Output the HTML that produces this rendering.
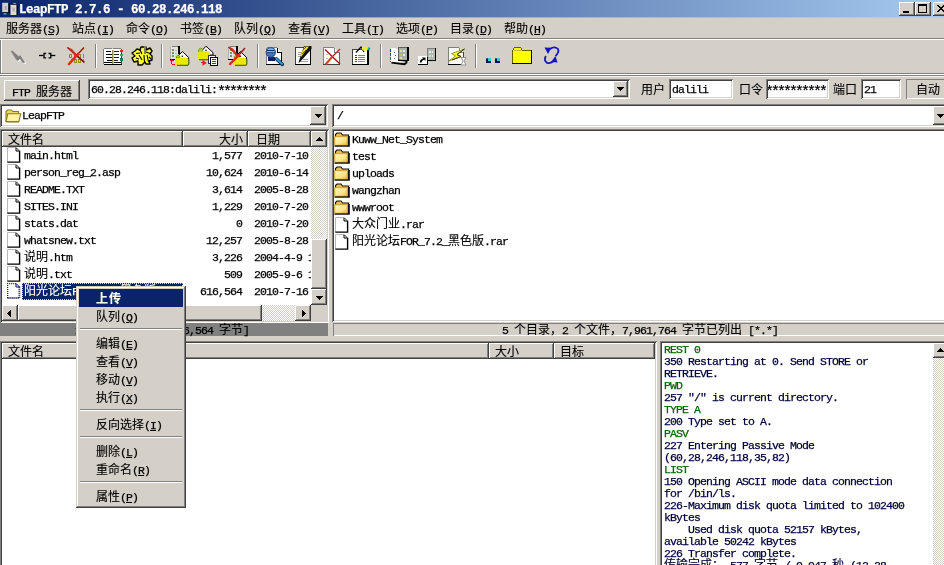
<!DOCTYPE html>
<html lang="zh-CN"><head><meta charset="utf-8"><title>LeapFTP 2.7.6 - 60.28.246.118</title>
<style>
html,body{margin:0;padding:0;width:944px;height:565px;overflow:hidden;background:#d4d0c8}
body{position:relative;font-family:"Liberation Mono","Noto Sans CJK SC",monospace;font-size:11.5px;letter-spacing:-.9px;color:#000;line-height:12px}
#w{position:absolute;left:0;top:0;width:944px;height:565px;overflow:hidden;will-change:transform}
.a{position:absolute;box-sizing:border-box}
.t{position:absolute;white-space:pre;height:12px;line-height:12px;-webkit-text-stroke:.25px}
.c{letter-spacing:0;font-size:12px;line-height:0;-webkit-text-stroke:.12px}
.s{font-size:15px;letter-spacing:-3px;line-height:0;position:relative;top:3px}
.b{font-weight:bold;letter-spacing:.1px}
.b .c{letter-spacing:1px}
.tt{font-size:12.5px;letter-spacing:-.5px}
u{text-decoration:underline}
.btn{background:#d4d0c8;box-shadow:inset -1px -1px 0 #404040,inset 1px 1px 0 #fff,inset -2px -2px 0 #808080,inset 2px 2px 0 #d4d0c8}
.sunk{box-shadow:inset 1px 1px 0 #808080,inset -1px -1px 0 #fff,inset 2px 2px 0 #404040,inset -2px -2px 0 #d4d0c8}
.hd{background:#d4d0c8;box-shadow:inset -1px -1px 0 #404040,inset 1px 1px 0 #fff,inset -2px -2px 0 #808080}
.track{background:#e9e7e3 repeating-conic-gradient(#fff 0% 25%,#d4d0c8 0% 50%) 0 0/2px 2px}
.menu{background:#d4d0c8;box-shadow:inset -1px -1px 0 #404040,inset 1px 1px 0 #d4d0c8,inset -2px -2px 0 #808080,inset 2px 2px 0 #fff}
</style></head>
<body>
<div id="w">
<div class="a" style="left:0;top:0;width:944px;height:18px;background:linear-gradient(90deg,#0a246a 0%,#a6caf0 100%)"></div>
<div class="t b tt" style="left:19px;top:4px;color:#fff">LeapFTP 2.7.6 - 60.28.246.118</div>
<div class="a" style="left:0px;top:17px;width:944px;height:1px;background:rgba(212,208,200,.6);"></div>
<svg class="a" style="left:0;top:0" width="20" height="18" viewBox="0 0 20 18"><rect x="2.200" y="2.800" width="6.200" height="9.400" fill="#d2d0c0"/><rect x="8.400" y="3" width="1.700" height="10" fill="#000"/><rect x="2.500" y="12.200" width="6" height="1" fill="#101830"/><rect x="4.600" y="6" width="2.200" height="3.500" fill="#a8a0b0"/><rect x="3.500" y="13.200" width="3" height="1.300" fill="#58b8e8"/><rect x="10.500" y="4.500" width="6.200" height="10.500" fill="#dcdad0"/><rect x="16.600" y="4.500" width="1.200" height="10.500" fill="#000"/><rect x="12.500" y="7.500" width="2.200" height="4" fill="#b8a8b8"/><rect x="13.300" y="3" width="2.500" height="1.300" fill="#58b8e8"/><rect x="10.500" y="4" width="6" height=".8" fill="#101830"/></svg>
<div class="a btn" style="left:899px;top:2px;width:16px;height:14px;"></div>
<div class="a btn" style="left:915px;top:2px;width:16px;height:14px;"></div>
<div class="a btn" style="left:933px;top:2px;width:16px;height:14px;"></div>
<div class="a" style="left:903px;top:11px;width:6px;height:2px;background:#000;"></div>
<div class="a " style="left:918px;top:4px;width:9px;height:9px;border:1px solid #000;border-top:2px solid #000;box-sizing:border-box"></div>
<svg class="a" style="left:937px;top:5px" width="8" height="7" shape-rendering="crispEdges"><path d="M0 0h2v1h1v1h2v-1h1v-1h2v1h-1v1h-1v1h-1v1h1v1h1v1h1v1h-2v-1h-1v-1h-2v1h-1v1h-2v-1h1v-1h1v-1h1v-1h-1v-1h-1v-1h-1z" fill="#000"/></svg>
<div class="t" style="left:6px;top:24px"><span class="c">服务器</span>(<u>S</u>)</div>
<div class="t" style="left:72px;top:24px"><span class="c">站点</span>(<u>I</u>)</div>
<div class="t" style="left:126px;top:24px"><span class="c">命令</span>(<u>O</u>)</div>
<div class="t" style="left:180px;top:24px"><span class="c">书签</span>(<u>B</u>)</div>
<div class="t" style="left:234px;top:24px"><span class="c">队列</span>(<u>Q</u>)</div>
<div class="t" style="left:288px;top:24px"><span class="c">查看</span>(<u>V</u>)</div>
<div class="t" style="left:342px;top:24px"><span class="c">工具</span>(<u>T</u>)</div>
<div class="t" style="left:396px;top:24px"><span class="c">选项</span>(<u>P</u>)</div>
<div class="t" style="left:450px;top:24px"><span class="c">目录</span>(<u>D</u>)</div>
<div class="t" style="left:504px;top:24px"><span class="c">帮助</span>(<u>H</u>)</div>
<div class="a" style="left:0px;top:38px;width:944px;height:1px;background:#808080;"></div>
<div class="a" style="left:0px;top:39px;width:944px;height:1px;background:#fff;"></div>
<div class="a" style="left:0px;top:40px;width:1px;height:33px;background:#808080;"></div>
<div class="a" style="left:1px;top:40px;width:1px;height:33px;background:#fff;"></div>
<div class="a" style="left:0px;top:73px;width:944px;height:1px;background:#808080;"></div>
<div class="a" style="left:0px;top:74px;width:944px;height:1px;background:#fff;"></div>
<div class="a" style="left:0px;top:75px;width:944px;height:1px;background:#808080;"></div>
<div class="a" style="left:0px;top:76px;width:944px;height:1px;background:#f4f3f0;"></div>
<div class="a" style="left:95px;top:44px;width:1px;height:24px;background:#808080;"></div>
<div class="a" style="left:96px;top:44px;width:1px;height:24px;background:#fff;"></div>
<div class="a" style="left:161px;top:44px;width:1px;height:24px;background:#808080;"></div>
<div class="a" style="left:162px;top:44px;width:1px;height:24px;background:#fff;"></div>
<div class="a" style="left:257px;top:44px;width:1px;height:24px;background:#808080;"></div>
<div class="a" style="left:258px;top:44px;width:1px;height:24px;background:#fff;"></div>
<div class="a" style="left:380px;top:44px;width:1px;height:24px;background:#808080;"></div>
<div class="a" style="left:381px;top:44px;width:1px;height:24px;background:#fff;"></div>
<div class="a" style="left:475px;top:44px;width:1px;height:24px;background:#808080;"></div>
<div class="a" style="left:476px;top:44px;width:1px;height:24px;background:#fff;"></div>
<svg class="a" style="left:0;top:40px" width="944" height="34" viewBox="0 40 944 34"><path d="M11.700 52 L13.500 51.800 L20 57.500 L21.300 56 L25.800 63 L25.400 64.200 L23.500 63.500 L21 60 L19 62 L17 60.500 Z" fill="#fff"/><path d="M10.700 51 L12.500 50.800 L19 56.500 L20.300 55 L24.800 62 L24.400 63.200 L22.500 62.500 L20 59 L18 61 L16 59.500 Z" fill="#808080"/><g fill="none" stroke="#000" stroke-width="1.300"><path d="M39 55.500 H43.500"/><path d="M46.200 53.500 H44 V57.800 H46.200"/><path d="M48.500 53.500 H50.800 V57.800 H48.500"/><path d="M51 55.500 H55.300"/></g><g fill="#908820" shape-rendering="crispEdges"><path d="M69 54h3v4h-3z M70 55v2h1v-2z" fill-rule="evenodd"/><rect x="74" y="54" width="1" height="4"/><path d="M78 54h3v4h-3z M79 55v2h1v-2z" fill-rule="evenodd"/><rect x="83" y="54" width="1" height="4"/><rect x="71" y="59" width="1" height="4"/><path d="M74 59h3v4h-3z M75 60v2h1v-2z" fill-rule="evenodd"/><path d="M78 59h3v4h-3z M79 60v2h1v-2z" fill-rule="evenodd"/><rect x="83" y="59" width="1" height="4"/></g><path d="M67.5 47.5 L84.5 62.5" stroke="#800000" stroke-width="1.6" fill="none"/><path d="M67 47 L72 49 L78 56 L76 57 Z" fill="#c03020"/><path d="M84 47.5 L77 55" stroke="#901010" stroke-width="1.3" fill="none"/><path d="M78 54 L69 64" stroke="#e02818" stroke-width="2.6" fill="none" stroke-linecap="round"/><g shape-rendering="crispEdges"><rect x="104" y="49" width="17" height="15" fill="#fff"/><rect x="103" y="49" width="1" height="15" fill="#808080"/><rect x="104" y="48" width="8" height="1" fill="#808080"/><rect x="113" y="48" width="8" height="1" fill="#808080"/><rect x="112" y="50" width="1" height="14" fill="#8a9048"/><rect x="113" y="50" width="1" height="14" fill="#c8c8a0"/><rect x="106" y="51" width="5" height="1" fill="#000"/><rect x="106" y="54" width="6" height="1" fill="#000"/><rect x="106" y="57" width="6" height="1" fill="#000"/><rect x="107" y="60" width="5" height="1" fill="#000"/><rect x="114" y="51" width="5" height="1" fill="#202020"/><rect x="114" y="54" width="5" height="1" fill="#202020"/><rect x="114" y="57" width="5" height="1" fill="#202020"/><rect x="114" y="60" width="4" height="1" fill="#202020"/><rect x="104" y="62" width="8" height="1" fill="#000"/><rect x="114" y="62" width="7" height="1" fill="#000"/><rect x="104" y="64" width="18" height="1" fill="#000"/><rect x="121" y="49" width="1" height="15" fill="#404040"/><rect x="120" y="50" width="3" height="2" fill="#e02828"/><rect x="120" y="54" width="3" height="2" fill="#40a070"/><rect x="120" y="58" width="3" height="3" fill="#187868"/></g><path d="M137 49 L140 50 L141 47 L146 47 L146 50 L150 48 L152 51 L150 54 L152 56 L152 60 L149 61 L150 64 L146 64 L145 62 L142 65 L138 65 L138 61 L134 62 L132 58 L135 56 L132 53 L135 51 Z" fill="#ffff30" stroke="#000" stroke-width="1.4" stroke-linejoin="round"/><path d="M139 55 L142 60 M144 55 L144.500 63 M147 55 L148.500 62 M136 53.500 L140 53 M146 52 L150 53.500 M140 50 L142 54 M149 57 L151 59 M136 58 L139 59" stroke="#000" stroke-width="1.100" fill="none"/><rect x="144" y="46" width="2" height="8" fill="#808060"/><g shape-rendering="crispEdges"><rect x="171" y="47" width="7" height="12" fill="#e4e4e4"/><rect x="172" y="46" width="7" height="1" fill="#808080"/><rect x="170" y="47" width="1" height="12" fill="#b0b0b0"/><rect x="178" y="46" width="2" height="8" fill="#000"/><rect x="172" y="49" width="2" height="2" fill="#909040"/><rect x="172" y="52" width="2" height="2" fill="#60a050"/><rect x="172" y="55" width="2" height="2" fill="#60a050"/><rect x="175" y="50" width="2" height="1" fill="#b8b8b8"/><rect x="175" y="53" width="2" height="1" fill="#b8b8b8"/><rect x="170" y="59" width="5" height="1" fill="#000"/></g><path d="M176.5 57.500 L182.4 51.500 L188.6 57.500 L188.6 59 L176.5 59 Z" fill="#fff" stroke="#000" stroke-width="1"/><path d="M176 57.500 Q176.5 54.300 179.5 55.800 L180 57.500 Z" fill="#b8d020" stroke="#60a000" stroke-width=".8"/><rect x="175.5" y="57.800" width="13" height="7.500" rx="2" fill="#e8e800"/><path d="M177 65.300 H187.5 Q188.8 65 188.8 63.500 V59" stroke="#487800" stroke-width="1.300" fill="none"/><rect x="181.7" y="55.500" width="1.400" height="1.500" fill="#303030"/><g fill="#e01010" shape-rendering="crispEdges"><rect x="171" y="59" width="1" height="5"/><rect x="170" y="60" width="4" height="1"/><rect x="172" y="64" width="3" height="1"/></g><path d="M201 51.500 L206 46.200 L213 52.600 L213 55 L201 55 Z" fill="#fff" stroke="#000" stroke-width="1"/><path d="M198.300 51.500 Q198.800 47 202 48.600 L203 51.500 Z" fill="#b8d020" stroke="#60a000" stroke-width=".8"/><rect x="198" y="51.300" width="12" height="8.400" rx="2" fill="#e8e800"/><path d="M199 59.700 H209" stroke="#487800" stroke-width="1.300"/><rect x="205.300" y="49.500" width="1.400" height="1.500" fill="#303030"/><g shape-rendering="crispEdges"><rect x="208" y="55" width="7" height="8" fill="#fff" stroke="#303050"/><rect x="210" y="57" width="7" height="8" fill="#fff" stroke="#000020"/><rect x="212" y="59" width="4" height="1" fill="#2040c0"/><rect x="212" y="61" width="4" height="1" fill="#2040c0"/><rect x="212" y="63" width="4" height="1" fill="#2040c0"/></g><path d="M201 62.500 L204.500 62.500 M203 61 L205.800 63 L203 64.800 Z" stroke="#e02020" stroke-width="1.100" fill="#e02020"/><g shape-rendering="crispEdges"><rect x="229" y="47" width="7" height="12" fill="#e4e4e4"/><rect x="230" y="46" width="7" height="1" fill="#808080"/><rect x="228" y="47" width="1" height="12" fill="#b0b0b0"/><rect x="236" y="46" width="2" height="8" fill="#000"/><rect x="230" y="49" width="2" height="2" fill="#909040"/><rect x="230" y="52" width="2" height="2" fill="#60a050"/><rect x="230" y="55" width="2" height="2" fill="#60a050"/><rect x="233" y="50" width="2" height="1" fill="#b8b8b8"/><rect x="233" y="53" width="2" height="1" fill="#b8b8b8"/><rect x="228" y="59" width="5" height="1" fill="#000"/></g><path d="M234.5 57.500 L240.4 51.500 L246.6 57.500 L246.6 59 L234.5 59 Z" fill="#fff" stroke="#000" stroke-width="1"/><path d="M234 57.500 Q234.5 54.300 237.5 55.800 L238 57.500 Z" fill="#b8d020" stroke="#60a000" stroke-width=".8"/><rect x="233.5" y="57.800" width="13" height="7.500" rx="2" fill="#e8e800"/><path d="M235 65.300 H245.5 Q246.8 65 246.8 63.500 V59" stroke="#487800" stroke-width="1.300" fill="none"/><rect x="239.7" y="55.500" width="1.400" height="1.500" fill="#303030"/><path d="M228.5 47 L240 57" stroke="#a01010" stroke-width="1.6" fill="none"/><path d="M229 46.5 L233 48.5 L238 55 L236 56 Z" fill="#d03020"/><path d="M245 48 L238 56" stroke="#901010" stroke-width="1.4"/><path d="M239 55 L230 64" stroke="#e02818" stroke-width="2.4" stroke-linecap="round"/><g shape-rendering="crispEdges"><path d="M267 48 H277 L281 52 V64 H267 Z" fill="#fff"/><rect x="266" y="48" width="1" height="16" fill="#808080"/><rect x="267" y="47" width="10" height="1" fill="#808080"/><rect x="281" y="52" width="1" height="13" fill="#000"/><rect x="266" y="64" width="16" height="1" fill="#000"/><path d="M277 48 V52 H281" fill="none" stroke="#000"/></g><rect x="268" y="57" width="7" height="4" fill="#102060"/><circle cx="270.800" cy="52.200" r="4.600" fill="#78b8ec" stroke="#205888" stroke-width="1.200"/><path d="M267 50.500 H274.500 M266.800 52.800 H274.800 M267.500 55 H274" stroke="#103070" stroke-width="1.200"/><path d="M276.500 59 L282.300 64.300" stroke="#103060" stroke-width="3.600" stroke-linecap="round"/><path d="M276.500 58.800 L282 63.800" stroke="#30a8d8" stroke-width="1.800" stroke-linecap="round"/><g shape-rendering="crispEdges"><rect x="296" y="48" width="14" height="16" fill="#fff"/><rect x="295" y="47" width="1" height="17" fill="#404040"/><rect x="295" y="47" width="15" height="1" fill="#404040"/><rect x="310" y="47" width="1" height="18" fill="#000"/><rect x="295" y="64" width="16" height="1" fill="#000"/><rect x="298" y="52" width="5" height="1" fill="#a0a0a0"/><rect x="298" y="54" width="4" height="1" fill="#a0a0a0"/><rect x="298" y="56" width="3" height="1" fill="#a0a0a0"/><rect x="303" y="59" width="5" height="1" fill="#a0a0a0"/><rect x="301" y="61" width="7" height="1" fill="#a0a0a0"/></g><path d="M304 46 L311.500 46 L311.500 49 L300 62 L298.500 63 L299 61 Z" fill="#101010"/><path d="M304.500 46.500 L309 46.500 L301 57 L300.500 55 Z" fill="#e8d820"/><path d="M303 50 L306 47 M302 54 L306 50" stroke="#806000" stroke-width="1"/><g shape-rendering="crispEdges"><path d="M324 48 H334 L339 52 V64 H324 Z" fill="#fff"/><rect x="323" y="47" width="1" height="18" fill="#808080"/><rect x="324" y="47" width="10" height="1" fill="#808080"/><rect x="339" y="52" width="1" height="13" fill="#606060"/><rect x="323" y="64" width="17" height="1" fill="#404040"/><path d="M334 48 V52 H339" fill="none" stroke="#808080"/><rect x="326" y="54" width="2" height="1" fill="#c0c0c0"/><rect x="326" y="58" width="2" height="1" fill="#c0c0c0"/></g><path d="M325 49.500 L340 64" stroke="#a01010" stroke-width="1.3"/><path d="M340 49 L332 57" stroke="#c02020" stroke-width="1.2"/><path d="M332 57 L325.500 64.500" stroke="#e04020" stroke-width="2"/><g shape-rendering="crispEdges"><rect x="353" y="50" width="14" height="14" fill="#fff"/><rect x="352" y="49" width="1" height="15" fill="#404040"/><rect x="352" y="49" width="15" height="1" fill="#404040"/><rect x="367" y="50" width="1.500" height="15" fill="#000"/><rect x="352" y="64" width="16.500" height="1.200" fill="#000"/><rect x="355" y="55" width="2" height="1" fill="#404040"/><rect x="358" y="55" width="7" height="1" fill="#808080"/><rect x="355" y="57" width="2" height="1" fill="#404040"/><rect x="358" y="57" width="7" height="1" fill="#808080"/><rect x="355" y="59" width="2" height="1" fill="#404040"/><rect x="358" y="59" width="7" height="1" fill="#808080"/><rect x="355" y="61" width="2" height="1" fill="#404040"/><rect x="358" y="61" width="7" height="1" fill="#a0a020"/></g><path d="M356 52.500 L361 47 L364 52" stroke="#000" stroke-width="1.2" fill="none"/><ellipse cx="365" cy="48.600" rx="3.300" ry="2" fill="#f0f000"/><path d="M368 47.300 L370.500 47.800 L369.800 50.300 L367.500 50.300 Z" fill="#20a0a0"/><g shape-rendering="crispEdges"><path d="M391 48 L401 49 L401 63 L391 62 Z" fill="#fff"/><rect x="398" y="47" width="9" height="13" fill="#a8b0a8"/><rect x="398" y="47" width="9" height="1" fill="#606060"/><rect x="398" y="47" width="1" height="13" fill="#606060"/><rect x="407" y="47" width="2" height="14" fill="#000"/><rect x="398" y="60" width="9" height="1" fill="#000"/><rect x="400" y="50" width="2" height="2" fill="#e0e0a0"/><rect x="403" y="50" width="2" height="2" fill="#e8e8e8"/><rect x="400" y="54" width="2" height="2" fill="#c0c060"/><rect x="403" y="54" width="2" height="2" fill="#e8e8e8"/><rect x="400" y="57" width="2" height="2" fill="#e0e0a0"/><rect x="390" y="49" width="1" height="3" fill="#2030c0"/><rect x="390" y="53" width="1" height="3" fill="#3040c0"/><rect x="390" y="57" width="1" height="3" fill="#208040"/><rect x="390" y="61" width="1" height="1" fill="#c02020"/><rect x="394" y="52" width="1" height="1" fill="#4060c0"/><rect x="395" y="55" width="1" height="1" fill="#4060c0"/><rect x="394" y="58" width="1" height="1" fill="#c06020"/></g><path d="M391.500 62.700 L404.500 64.200 L406.500 62.500 L406.500 60" stroke="#000" stroke-width="1.800" fill="none"/><path d="M398 60 L406 61" stroke="#000" stroke-width="1"/><g shape-rendering="crispEdges"><rect x="427" y="48" width="8" height="12" fill="#b0b8b0"/><rect x="427" y="48" width="8" height="1" fill="#808080"/><rect x="427" y="48" width="1" height="12" fill="#808080"/><rect x="435" y="48" width="1" height="13" fill="#000"/><rect x="427" y="60" width="9" height="1" fill="#000"/><rect x="429" y="51" width="2" height="2" fill="#e8f0e8"/><rect x="432" y="51" width="1" height="2" fill="#e8f0e8"/><rect x="429" y="55" width="2" height="2" fill="#d0e8d0"/><rect x="432" y="55" width="1" height="2" fill="#e8f0e8"/><rect x="418" y="56" width="9" height="8" fill="#fff"/><rect x="418" y="64" width="10" height="1" fill="#000"/><rect x="427" y="57" width="1" height="8" fill="#000"/></g><path d="M420.500 62.500 Q421 59.500 424 59" stroke="#000" stroke-width="1.700" fill="none"/><path d="M422 57.500 H425.500 V61 Z" fill="#000"/><g shape-rendering="crispEdges"><path d="M449 48 H459 L463 52 V64 H449 Z" fill="#fff"/><rect x="448" y="47" width="1" height="17" fill="#808080"/><rect x="449" y="47" width="10" height="1" fill="#808080"/><rect x="463" y="52" width="1" height="6" fill="#404040"/><rect x="448" y="64" width="13" height="1" fill="#000"/><path d="M459 48 V52 H463" fill="none" stroke="#808080"/></g><path d="M464.500 49 L451.500 53.600 L455.500 56 L448.300 61.200 L461 56.500 L457 54.500 Z" fill="#fcfc20" stroke="#707000" stroke-width=".7" stroke-linejoin="round"/><path d="M464.500 49 L457 54.500 L461 56.500 L452 60" stroke="#282800" stroke-width=".9" fill="none"/><path d="M461 57.500 H466 L464 61 L466 65 H461 L463 61 Z" fill="#fff" stroke="#909090" stroke-width="1"/><g shape-rendering="crispEdges"><rect x="486" y="58" width="5" height="5" fill="#101050"/><rect x="488" y="58" width="3" height="3" fill="#40c8d0"/><rect x="486" y="58" width="2" height="1" fill="#306080"/></g><g shape-rendering="crispEdges"><rect x="495" y="58" width="5" height="5" fill="#101050"/><rect x="497" y="58" width="3" height="3" fill="#40c8d0"/><rect x="495" y="58" width="2" height="1" fill="#306080"/></g><g shape-rendering="crispEdges"><path d="M513 50 L515 47 H521 L523 50 H531 V63 H513 Z" fill="#ffff00"/><path d="M512.500 63.500 V50.500 L514.500 47.500 H520.500 L522.500 50.500 H531" fill="none" stroke="#606000" stroke-width="1"/><rect x="531" y="50" width="1" height="14" fill="#000"/><rect x="512" y="63" width="20" height="1" fill="#000"/><rect x="514" y="50" width="8" height="1" fill="#c0c040"/></g><g fill="none" stroke="#1414c4" stroke-width="1.800"><path d="M550 49 Q554.500 45.800 557.800 48.800 Q559.800 52 555.500 56"/><path d="M545.800 56 Q543.500 60.500 547 62.800 Q550 63.800 553 61.500"/></g><path d="M544.500 47.500 L551.500 47.800 L548 54 Z" fill="#1414c4"/><path d="M557.500 62.500 L551 62 L555.500 56 Z" fill="#1414c4"/></svg>
<div class="a btn" style="left:4px;top:80px;width:76px;height:21px;"></div>
<div class="t " style="left:12px;top:87px;">FTP <span class="c">服务器</span></div>
<div class="a sunk" style="left:88px;top:79px;width:542px;height:20px;background:#fff"></div>
<div class="t" style="left:91px;top:84px">60.28.246.118:dalili:<span class="s">********</span></div>
<div class="a btn" style="left:613px;top:81px;width:15px;height:16px;"></div>
<svg class="a" style="left:617px;top:87px" width="7" height="4" shape-rendering="crispEdges"><path d="M0 0h7v1h-1v1h-1v1h-1v1h-1v-1h-1v-1h-1v-1h-1z" fill="#000"/></svg>
<div class="t " style="left:641px;top:85px;"><span class="c">用户</span></div>
<div class="a sunk" style="left:669px;top:79px;width:64px;height:20px;background:#fff"></div>
<div class="t " style="left:672px;top:84px;">dalili</div>
<div class="t " style="left:739px;top:85px;"><span class="c">口令</span></div>
<div class="a sunk" style="left:766px;top:79px;width:63px;height:20px;background:#fff"></div>
<div class="a" style="left:768px;top:81px;width:58px;height:16px;overflow:hidden"><div class="t" style="right:1px;top:3px"><span class="s">**********</span></div></div>
<div class="t " style="left:833px;top:85px;"><span class="c">端口</span></div>
<div class="a sunk" style="left:861px;top:79px;width:40px;height:20px;background:#fff"></div>
<div class="t " style="left:864px;top:84px;">21</div>
<div class="a " style="left:906px;top:79px;width:44px;height:20px;box-shadow:inset 1px 1px 0 #808080,inset 0 -1px 0 #fff"></div>
<div class="t " style="left:916px;top:85px;"><span class="c">自动</span></div>
<div class="a sunk" style="left:0px;top:104px;width:328px;height:23px;background:#fff"></div>
<div class="a btn" style="left:310px;top:106px;width:16px;height:19px;"></div>
<svg class="a" style="left:315px;top:114px" width="7" height="4" shape-rendering="crispEdges"><path d="M0 0h7v1h-1v1h-1v1h-1v1h-1v-1h-1v-1h-1v-1h-1z" fill="#000"/></svg>
<svg class="a" style="left:5px;top:109px" width="17" height="14" viewBox="0 0 17 14"><path d="M1 12.500 V2.500 L2.500 1 H6.500 L7.800 2.500 H13.500 V5" fill="#ecd868" stroke="#8a7820" stroke-width="1.100" stroke-linejoin="round"/><path d="M2.800 4.700 H15.800 L13.800 12.600 H1 Z" fill="#fff4a4" stroke="#8a7820" stroke-width="1.100" stroke-linejoin="round"/><path d="M1.500 13.300 H14" stroke="#b0a050" stroke-width=".8"/></svg>
<div class="t " style="left:22px;top:110px;">LeapFTP</div>
<div class="a sunk" style="left:332px;top:104px;width:620px;height:23px;background:#fff"></div>
<div class="a btn" style="left:933px;top:106px;width:16px;height:19px;"></div>
<svg class="a" style="left:937px;top:114px" width="7" height="4" shape-rendering="crispEdges"><path d="M0 0h7v1h-1v1h-1v1h-1v1h-1v-1h-1v-1h-1v-1h-1z" fill="#000"/></svg>
<div class="t " style="left:337px;top:110px;">/</div>
<div class="a sunk" style="left:0px;top:129px;width:329px;height:194px;background:#fff"></div>
<div class="a hd" style="left:2px;top:131px;width:181px;height:16px;"></div>
<div class="t " style="left:8px;top:135px;"><span class="c">文件名</span></div>
<div class="a hd" style="left:183px;top:131px;width:65px;height:16px;"></div>
<div class="t " style="right:701px;top:135px;"><span class="c">大小</span></div>
<div class="a hd" style="left:248px;top:131px;width:63px;height:16px;"></div>
<div class="t " style="left:256px;top:135px;"><span class="c">日期</span></div>
<div class="a" style="left:2px;top:146px;width:309px;height:159px;overflow:hidden">
<svg class="a" style="left:5px;top:1px" width="14" height="17" viewBox="0 0 14 17"><path d="M0.500 0.500 H9 L12.500 4 V15 H0.500 Z" fill="#fff"/><path d="M0.500 15 V0.500 H9" fill="none" stroke="#b8b8b8" stroke-width="1"/><path d="M9 0.500 L12.500 4" fill="none" stroke="#303030" stroke-width="1"/><path d="M9 1 V4 H12" fill="none" stroke="#000" stroke-width="1"/><path d="M12.600 3.800 V15.100 H0.300" fill="none" stroke="#000" stroke-width="1.400"/></svg>
<div class="t" style="left:22px;top:4px;">main.html</div>
<div class="t" style="right:69px;top:4px">1,577</div>
<div class="t" style="left:252px;top:4px">2010-7-10</div>
<svg class="a" style="left:5px;top:18px" width="14" height="17" viewBox="0 0 14 17"><path d="M0.500 0.500 H9 L12.500 4 V15 H0.500 Z" fill="#fff"/><path d="M0.500 15 V0.500 H9" fill="none" stroke="#b8b8b8" stroke-width="1"/><path d="M9 0.500 L12.500 4" fill="none" stroke="#303030" stroke-width="1"/><path d="M9 1 V4 H12" fill="none" stroke="#000" stroke-width="1"/><path d="M12.600 3.800 V15.100 H0.300" fill="none" stroke="#000" stroke-width="1.400"/></svg>
<div class="t" style="left:22px;top:21px;">person_reg_2.asp</div>
<div class="t" style="right:69px;top:21px">10,624</div>
<div class="t" style="left:252px;top:21px">2010-6-14</div>
<svg class="a" style="left:5px;top:35px" width="14" height="17" viewBox="0 0 14 17"><path d="M0.500 0.500 H9 L12.500 4 V15 H0.500 Z" fill="#fff"/><path d="M0.500 15 V0.500 H9" fill="none" stroke="#b8b8b8" stroke-width="1"/><path d="M9 0.500 L12.500 4" fill="none" stroke="#303030" stroke-width="1"/><path d="M9 1 V4 H12" fill="none" stroke="#000" stroke-width="1"/><path d="M12.600 3.800 V15.100 H0.300" fill="none" stroke="#000" stroke-width="1.400"/></svg>
<div class="t" style="left:22px;top:38px;">README.TXT</div>
<div class="t" style="right:69px;top:38px">3,614</div>
<div class="t" style="left:252px;top:38px">2005-8-28</div>
<svg class="a" style="left:5px;top:52px" width="14" height="17" viewBox="0 0 14 17"><path d="M0.500 0.500 H9 L12.500 4 V15 H0.500 Z" fill="#fff"/><path d="M0.500 15 V0.500 H9" fill="none" stroke="#b8b8b8" stroke-width="1"/><path d="M9 0.500 L12.500 4" fill="none" stroke="#303030" stroke-width="1"/><path d="M9 1 V4 H12" fill="none" stroke="#000" stroke-width="1"/><path d="M12.600 3.800 V15.100 H0.300" fill="none" stroke="#000" stroke-width="1.400"/></svg>
<div class="t" style="left:22px;top:55px;">SITES.INI</div>
<div class="t" style="right:69px;top:55px">1,229</div>
<div class="t" style="left:252px;top:55px">2010-7-20</div>
<svg class="a" style="left:5px;top:69px" width="14" height="17" viewBox="0 0 14 17"><path d="M0.500 0.500 H9 L12.500 4 V15 H0.500 Z" fill="#fff"/><path d="M0.500 15 V0.500 H9" fill="none" stroke="#b8b8b8" stroke-width="1"/><path d="M9 0.500 L12.500 4" fill="none" stroke="#303030" stroke-width="1"/><path d="M9 1 V4 H12" fill="none" stroke="#000" stroke-width="1"/><path d="M12.600 3.800 V15.100 H0.300" fill="none" stroke="#000" stroke-width="1.400"/></svg>
<div class="t" style="left:22px;top:72px;">stats.dat</div>
<div class="t" style="right:69px;top:72px">0</div>
<div class="t" style="left:252px;top:72px">2010-7-20</div>
<svg class="a" style="left:5px;top:86px" width="14" height="17" viewBox="0 0 14 17"><path d="M0.500 0.500 H9 L12.500 4 V15 H0.500 Z" fill="#fff"/><path d="M0.500 15 V0.500 H9" fill="none" stroke="#b8b8b8" stroke-width="1"/><path d="M9 0.500 L12.500 4" fill="none" stroke="#303030" stroke-width="1"/><path d="M9 1 V4 H12" fill="none" stroke="#000" stroke-width="1"/><path d="M12.600 3.800 V15.100 H0.300" fill="none" stroke="#000" stroke-width="1.400"/></svg>
<div class="t" style="left:22px;top:89px;">whatsnew.txt</div>
<div class="t" style="right:69px;top:89px">12,257</div>
<div class="t" style="left:252px;top:89px">2005-8-28</div>
<svg class="a" style="left:5px;top:103px" width="14" height="17" viewBox="0 0 14 17"><path d="M0.500 0.500 H9 L12.500 4 V15 H0.500 Z" fill="#fff"/><path d="M0.500 15 V0.500 H9" fill="none" stroke="#b8b8b8" stroke-width="1"/><path d="M9 0.500 L12.500 4" fill="none" stroke="#303030" stroke-width="1"/><path d="M9 1 V4 H12" fill="none" stroke="#000" stroke-width="1"/><path d="M12.600 3.800 V15.100 H0.300" fill="none" stroke="#000" stroke-width="1.400"/></svg>
<div class="t" style="left:22px;top:106px;"><span class="c">说明</span>.htm</div>
<div class="t" style="right:69px;top:106px">3,226</div>
<div class="t" style="left:252px;top:106px">2004-4-9 1</div>
<svg class="a" style="left:5px;top:120px" width="14" height="17" viewBox="0 0 14 17"><path d="M0.500 0.500 H9 L12.500 4 V15 H0.500 Z" fill="#fff"/><path d="M0.500 15 V0.500 H9" fill="none" stroke="#b8b8b8" stroke-width="1"/><path d="M9 0.500 L12.500 4" fill="none" stroke="#303030" stroke-width="1"/><path d="M9 1 V4 H12" fill="none" stroke="#000" stroke-width="1"/><path d="M12.600 3.800 V15.100 H0.300" fill="none" stroke="#000" stroke-width="1.400"/></svg>
<div class="t" style="left:22px;top:123px;"><span class="c">说明</span>.txt</div>
<div class="t" style="right:69px;top:123px">509</div>
<div class="t" style="left:252px;top:123px">2005-9-6 1</div>
<div class="a" style="left:20px;top:137px;width:161px;height:17px;background:#0a246a;outline:1px dotted #d4d0c8;outline-offset:-1px"></div>
<svg class="a" style="left:5px;top:137px" width="14" height="17" viewBox="0 0 14 17"><path d="M0.500 0.500 H9 L12.500 4 V15 H0.500 Z" fill="#fbfcff"/><path d="M0.600 15 V0.600 H9" fill="none" stroke="#0a1c58" stroke-width="1.200" stroke-dasharray="1 1"/><path d="M9 0.500 V4 H12.500 M9 0.500 L12.500 4" fill="none" stroke="#0a1c58" stroke-width="1"/><path d="M12.400 3.800 V15 H0.300" fill="none" stroke="#060f40" stroke-width="1.800" stroke-dasharray="1 1"/></svg>
<div class="t" style="left:22px;top:140px;color:#fff"><span class="c">阳光论坛</span>FOR_7.2_<span class="c">黑色版</span>...</div>
<div class="t" style="right:69px;top:140px">616,564</div>
<div class="t" style="left:252px;top:140px">2010-7-16</div>
</div>
<div class="a track" style="left:311px;top:131px;width:16px;height:174px;"></div>
<div class="a btn" style="left:311px;top:131px;width:16px;height:16px;"></div>
<svg class="a" style="left:316px;top:137px" width="7" height="4" shape-rendering="crispEdges"><path d="M3 0h1v1h1v1h1v1h1v1h-7v-1h1v-1h1v-1h1z" fill="#000"/></svg>
<div class="a btn" style="left:311px;top:239px;width:16px;height:50px;"></div>
<div class="a btn" style="left:311px;top:289px;width:16px;height:16px;"></div>
<svg class="a" style="left:316px;top:296px" width="7" height="4" shape-rendering="crispEdges"><path d="M0 0h7v1h-1v1h-1v1h-1v1h-1v-1h-1v-1h-1v-1h-1z" fill="#000"/></svg>
<div class="a track" style="left:2px;top:305px;width:309px;height:16px;"></div>
<div class="a btn" style="left:2px;top:305px;width:16px;height:16px;"></div>
<svg class="a" style="left:7px;top:310px" width="4" height="7" shape-rendering="crispEdges"><path d="M3 0h1v7h-1v-1h-1v-1h-1v-1h-1v-1h1v-1h1v-1h1z" fill="#000"/></svg>
<div class="a btn" style="left:18px;top:305px;width:244px;height:16px;"></div>
<div class="a btn" style="left:295px;top:305px;width:16px;height:16px;"></div>
<svg class="a" style="left:302px;top:310px" width="4" height="7" shape-rendering="crispEdges"><path d="M0 0h1v1h1v1h1v1h1v1h-1v1h-1v1h-1v1h-1z" fill="#000"/></svg>
<div class="a" style="left:311px;top:305px;width:16px;height:16px;background:#d4d0c8;"></div>
<div class="a" style="left:0px;top:323px;width:328px;height:13px;background:#808080;"></div>
<div class="t " style="left:75px;top:325px;">1 <span class="c">个文件已选择</span> [616,564 <span class="c">字节</span>]</div>
<div class="a sunk" style="left:332px;top:129px;width:620px;height:193px;background:#fff"></div>
<svg class="a" style="left:334px;top:132px" width="17" height="16" viewBox="0 0 17 16"><defs><linearGradient id="fg" x1="0" y1="0" x2="1" y2="1"><stop offset="0" stop-color="#fff8c8"/><stop offset=".6" stop-color="#fbe488"/><stop offset="1" stop-color="#e8b840"/></linearGradient></defs><path d="M1.5 5 V2.5 L3 1 H7 L8.500 3 H14.500 V13.500 H1.500 Z" fill="#e8c050" stroke="#181000" stroke-width="1.100"/><path d="M0.700 4.700 H13.300 V13.300 H0.700 Z" fill="url(#fg)" stroke="#c89828" stroke-width=".9"/><path d="M0.500 14.100 H15.200 V4" fill="none" stroke="#101010" stroke-width="1.250"/></svg>
<div class="t " style="left:352px;top:134px;">Kuww_Net_System</div>
<svg class="a" style="left:334px;top:149px" width="17" height="16" viewBox="0 0 17 16"><defs><linearGradient id="fg" x1="0" y1="0" x2="1" y2="1"><stop offset="0" stop-color="#fff8c8"/><stop offset=".6" stop-color="#fbe488"/><stop offset="1" stop-color="#e8b840"/></linearGradient></defs><path d="M1.5 5 V2.5 L3 1 H7 L8.500 3 H14.500 V13.500 H1.500 Z" fill="#e8c050" stroke="#181000" stroke-width="1.100"/><path d="M0.700 4.700 H13.300 V13.300 H0.700 Z" fill="url(#fg)" stroke="#c89828" stroke-width=".9"/><path d="M0.500 14.100 H15.200 V4" fill="none" stroke="#101010" stroke-width="1.250"/></svg>
<div class="t " style="left:352px;top:151px;">test</div>
<svg class="a" style="left:334px;top:166px" width="17" height="16" viewBox="0 0 17 16"><defs><linearGradient id="fg" x1="0" y1="0" x2="1" y2="1"><stop offset="0" stop-color="#fff8c8"/><stop offset=".6" stop-color="#fbe488"/><stop offset="1" stop-color="#e8b840"/></linearGradient></defs><path d="M1.5 5 V2.5 L3 1 H7 L8.500 3 H14.500 V13.500 H1.500 Z" fill="#e8c050" stroke="#181000" stroke-width="1.100"/><path d="M0.700 4.700 H13.300 V13.300 H0.700 Z" fill="url(#fg)" stroke="#c89828" stroke-width=".9"/><path d="M0.500 14.100 H15.200 V4" fill="none" stroke="#101010" stroke-width="1.250"/></svg>
<div class="t " style="left:352px;top:168px;">uploads</div>
<svg class="a" style="left:334px;top:183px" width="17" height="16" viewBox="0 0 17 16"><defs><linearGradient id="fg" x1="0" y1="0" x2="1" y2="1"><stop offset="0" stop-color="#fff8c8"/><stop offset=".6" stop-color="#fbe488"/><stop offset="1" stop-color="#e8b840"/></linearGradient></defs><path d="M1.5 5 V2.5 L3 1 H7 L8.500 3 H14.500 V13.500 H1.500 Z" fill="#e8c050" stroke="#181000" stroke-width="1.100"/><path d="M0.700 4.700 H13.300 V13.300 H0.700 Z" fill="url(#fg)" stroke="#c89828" stroke-width=".9"/><path d="M0.500 14.100 H15.200 V4" fill="none" stroke="#101010" stroke-width="1.250"/></svg>
<div class="t " style="left:352px;top:185px;">wangzhan</div>
<svg class="a" style="left:334px;top:200px" width="17" height="16" viewBox="0 0 17 16"><defs><linearGradient id="fg" x1="0" y1="0" x2="1" y2="1"><stop offset="0" stop-color="#fff8c8"/><stop offset=".6" stop-color="#fbe488"/><stop offset="1" stop-color="#e8b840"/></linearGradient></defs><path d="M1.5 5 V2.5 L3 1 H7 L8.500 3 H14.500 V13.500 H1.500 Z" fill="#e8c050" stroke="#181000" stroke-width="1.100"/><path d="M0.700 4.700 H13.300 V13.300 H0.700 Z" fill="url(#fg)" stroke="#c89828" stroke-width=".9"/><path d="M0.500 14.100 H15.200 V4" fill="none" stroke="#101010" stroke-width="1.250"/></svg>
<div class="t " style="left:352px;top:202px;">wwwroot</div>
<svg class="a" style="left:335px;top:217px" width="14" height="17" viewBox="0 0 14 17"><path d="M0.500 0.500 H9 L12.500 4 V15 H0.500 Z" fill="#fff"/><path d="M0.500 15 V0.500 H9" fill="none" stroke="#b8b8b8" stroke-width="1"/><path d="M9 0.500 L12.500 4" fill="none" stroke="#303030" stroke-width="1"/><path d="M9 1 V4 H12" fill="none" stroke="#000" stroke-width="1"/><path d="M12.600 3.800 V15.100 H0.300" fill="none" stroke="#000" stroke-width="1.400"/></svg>
<div class="t " style="left:352px;top:219px;"><span class="c">大众门业</span>.rar</div>
<svg class="a" style="left:335px;top:234px" width="14" height="17" viewBox="0 0 14 17"><path d="M0.500 0.500 H9 L12.500 4 V15 H0.500 Z" fill="#fff"/><path d="M0.500 15 V0.500 H9" fill="none" stroke="#b8b8b8" stroke-width="1"/><path d="M9 0.500 L12.500 4" fill="none" stroke="#303030" stroke-width="1"/><path d="M9 1 V4 H12" fill="none" stroke="#000" stroke-width="1"/><path d="M12.600 3.800 V15.100 H0.300" fill="none" stroke="#000" stroke-width="1.400"/></svg>
<div class="t " style="left:352px;top:236px;"><span class="c">阳光论坛</span>FOR_7.2_<span class="c">黑色版</span>.rar</div>
<div class="a" style="left:333px;top:323px;width:611px;height:1px;background:#808080;"></div>
<div class="a" style="left:333px;top:335px;width:611px;height:1px;background:#fff;"></div>
<div class="a" style="left:333px;top:323px;width:1px;height:13px;background:#808080;"></div>
<div class="t " style="left:502px;top:325px;">5 <span class="c">个目录，</span>2 <span class="c">个文件，</span>7,961,764 <span class="c">字节已列出</span> [*.*]</div>
<div class="a sunk" style="left:0px;top:341px;width:657px;height:231px;background:#fff"></div>
<div class="a hd" style="left:2px;top:343px;width:487px;height:16px;"></div>
<div class="t " style="left:8px;top:347px;"><span class="c">文件名</span></div>
<div class="a hd" style="left:489px;top:343px;width:65px;height:16px;"></div>
<div class="t " style="left:495px;top:347px;"><span class="c">大小</span></div>
<div class="a hd" style="left:554px;top:343px;width:101px;height:16px;"></div>
<div class="t " style="left:560px;top:347px;"><span class="c">目标</span></div>
<div class="a sunk" style="left:660px;top:341px;width:300px;height:231px;background:#fff"></div>
<div class="a track" style="left:933px;top:343px;width:16px;height:222px;"></div>
<div class="a btn" style="left:933px;top:343px;width:16px;height:15px;"></div>
<svg class="a" style="left:937px;top:348px" width="7" height="4" shape-rendering="crispEdges"><path d="M3 0h1v1h1v1h1v1h1v1h-7v-1h1v-1h1v-1h1z" fill="#000"/></svg>
<div class="a" style="left:661px;top:344px;width:272px;height:221px;overflow:hidden">
<div class="t" style="left:3px;top:0px;color:#006400">REST 0</div>
<div class="t" style="left:3px;top:12px;color:#00003c">350 Restarting at 0. Send STORE or</div>
<div class="t" style="left:3px;top:24px;color:#00003c">RETRIEVE.</div>
<div class="t" style="left:3px;top:36px;color:#006400">PWD</div>
<div class="t" style="left:3px;top:48px;color:#00003c">257 "/" is current directory.</div>
<div class="t" style="left:3px;top:60px;color:#006400">TYPE A</div>
<div class="t" style="left:3px;top:72px;color:#00003c">200 Type set to A.</div>
<div class="t" style="left:3px;top:84px;color:#006400">PASV</div>
<div class="t" style="left:3px;top:96px;color:#00003c">227 Entering Passive Mode</div>
<div class="t" style="left:3px;top:108px;color:#00003c">(60,28,246,118,35,82)</div>
<div class="t" style="left:3px;top:120px;color:#006400">LIST</div>
<div class="t" style="left:3px;top:132px;color:#00003c">150 Opening ASCII mode data connection</div>
<div class="t" style="left:3px;top:144px;color:#00003c">for /bin/ls.</div>
<div class="t" style="left:3px;top:156px;color:#00003c">226-Maximum disk quota limited to 102400</div>
<div class="t" style="left:3px;top:168px;color:#00003c">kBytes</div>
<div class="t" style="left:3px;top:180px;color:#00003c">    Used disk quota 52157 kBytes,</div>
<div class="t" style="left:3px;top:192px;color:#00003c">available 50242 kBytes</div>
<div class="t" style="left:3px;top:204px;color:#00003c">226 Transfer complete.</div>
<div class="t" style="left:3px;top:216px;color:#00003c"><span class="c">传输完成：</span> 577 <span class="c">字节</span> / 0.047 <span class="c">秒</span> (12.28</div>
</div>
<div class="a menu" style="left:76px;top:286px;width:110px;height:222px;"></div>
<div class="a" style="left:79px;top:289px;width:104px;height:18px;background:#0a246a;"></div>
<div class="t b" style="left:96px;top:294px;color:#fff"><span class="c">上传</span></div>
<div class="t" style="left:96px;top:312px"><span class="c">队列</span>(<u>Q</u>)</div>
<div class="a" style="left:80px;top:328px;width:102px;height:1px;background:#808080;"></div>
<div class="a" style="left:80px;top:329px;width:102px;height:1px;background:#fff;"></div>
<div class="t" style="left:96px;top:339px"><span class="c">编辑</span>(<u>E</u>)</div>
<div class="t" style="left:96px;top:357px"><span class="c">查看</span>(<u>V</u>)</div>
<div class="t" style="left:96px;top:375px"><span class="c">移动</span>(<u>V</u>)</div>
<div class="t" style="left:96px;top:393px"><span class="c">执行</span>(<u>X</u>)</div>
<div class="a" style="left:80px;top:409px;width:102px;height:1px;background:#808080;"></div>
<div class="a" style="left:80px;top:410px;width:102px;height:1px;background:#fff;"></div>
<div class="t" style="left:96px;top:420px"><span class="c">反向选择</span>(<u>I</u>)</div>
<div class="a" style="left:80px;top:436px;width:102px;height:1px;background:#808080;"></div>
<div class="a" style="left:80px;top:437px;width:102px;height:1px;background:#fff;"></div>
<div class="t" style="left:96px;top:447px"><span class="c">删除</span>(<u>L</u>)</div>
<div class="t" style="left:96px;top:465px"><span class="c">重命名</span>(<u>R</u>)</div>
<div class="a" style="left:80px;top:481px;width:102px;height:1px;background:#808080;"></div>
<div class="a" style="left:80px;top:482px;width:102px;height:1px;background:#fff;"></div>
<div class="t" style="left:96px;top:492px"><span class="c">属性</span>(<u>P</u>)</div>
</div>
</body></html>
